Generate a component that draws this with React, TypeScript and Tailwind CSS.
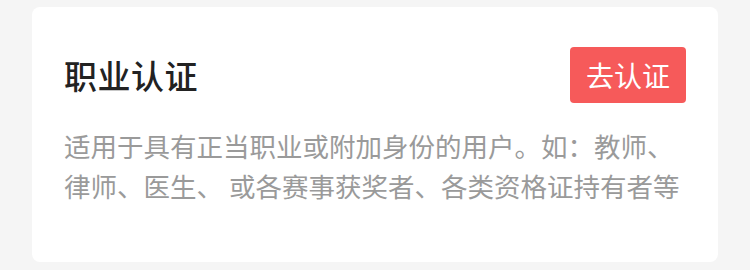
import React from "react";

export default function App() {
  return (
    <div
      className="h-[270px] w-[750px] bg-[#f5f5f5] pt-[7px] px-[32px]"
      style={{ fontFamily: '"Noto Sans CJK SC", "Noto Sans", sans-serif' }}
    >
      <div className="rounded-[8px] bg-white px-[32px] pt-[40px] h-[255px]">
        <div className="flex items-center justify-between h-[56px]">
          <h2 className="text-[33px] font-medium tracking-[0.5px] text-[#222222] leading-none">职业认证</h2>
          <button className="h-[56px] rounded-[4px] bg-[#f65a5a] px-[16px] text-[28px] leading-none text-white">
            去认证
          </button>
        </div>
        <p className="mt-[23px] text-[26.5px] leading-[40px] text-[#9a9a9a]">
          适用于具有正当职业或附加身份的用户。如：教师、律师、医生、 或各赛事获奖者、各类资格证持有者等
        </p>
      </div>
    </div>
  );
}
